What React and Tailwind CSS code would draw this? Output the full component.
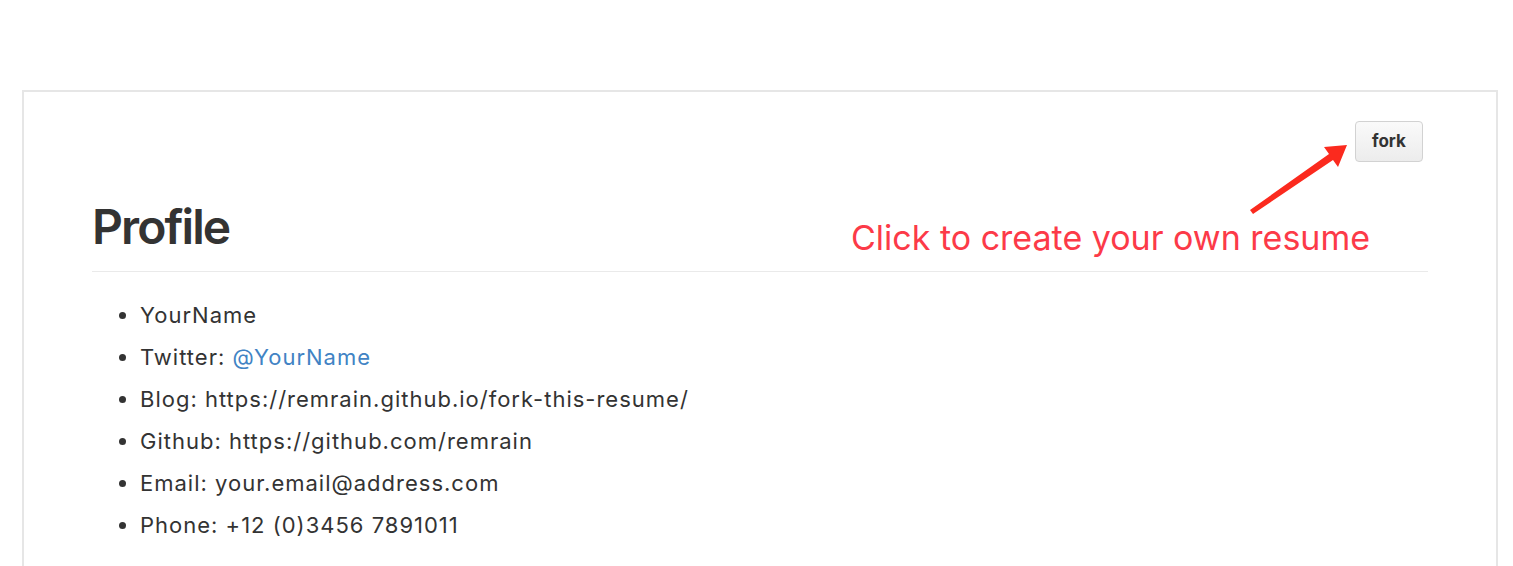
import React from 'react';

const items = [
  { label: 'YourName' },
  { label: 'Twitter: ', link: '@YourName' },
  { label: 'Blog: https://remrain.github.io/fork-this-resume/' },
  { label: 'Github: https://github.com/remrain' },
  { label: 'Email: your.email@address.com' },
  { label: 'Phone: +12 (0)3456 7891011' },
];

const Arrow = () => (
  <svg className="absolute left-0 top-0 pointer-events-none" width="1513" height="566" viewBox="0 0 1513 566">
    <polygon
      points="1250,210 1329,154 1324,147 1347,145 1338,167 1333,160 1253,214"
      fill="#fb2a1e"
    />
  </svg>
);

export default function App() {
  return (
    <div className="relative w-[1513px] h-[566px] overflow-hidden bg-white font-['Inter','Liberation_Sans',sans-serif] text-[#333]">
      <div className="pt-[90px] pl-[22px]">
        <div className="w-[1476px] border-2 border-[#e6e6e6] border-b-0 px-[68px] pt-[29px] pb-[40px]">
          <div className="flex justify-end pr-[5px]">
            <button className="h-[41px] w-[68px] rounded-[4px] border border-[#d2d2d2] bg-gradient-to-b from-[#fafafa] to-[#ececec] text-[17px] font-bold text-[#333]">
              fork
            </button>
          </div>
          <h1 className="mt-[35px] border-b border-[#eaeaea] pb-[14px] text-[48px] font-semibold leading-[60px] tracking-[-1.9px]">
            Profile
          </h1>
          <ul className="mt-[22px] list-disc pl-[48px] text-[22px] leading-[42px] tracking-[1px]">
            {items.map((it) => (
              <li key={it.label}>
                {it.label}
                {it.link && <a className="text-[#4183c4]">{it.link}</a>}
              </li>
            ))}
          </ul>
        </div>
      </div>
      <div className="absolute left-[851px] top-[218px] text-[34px] leading-[40px] text-[#fc3a48]">
        Click to create your own resume
      </div>
      <Arrow />
    </div>
  );
}
